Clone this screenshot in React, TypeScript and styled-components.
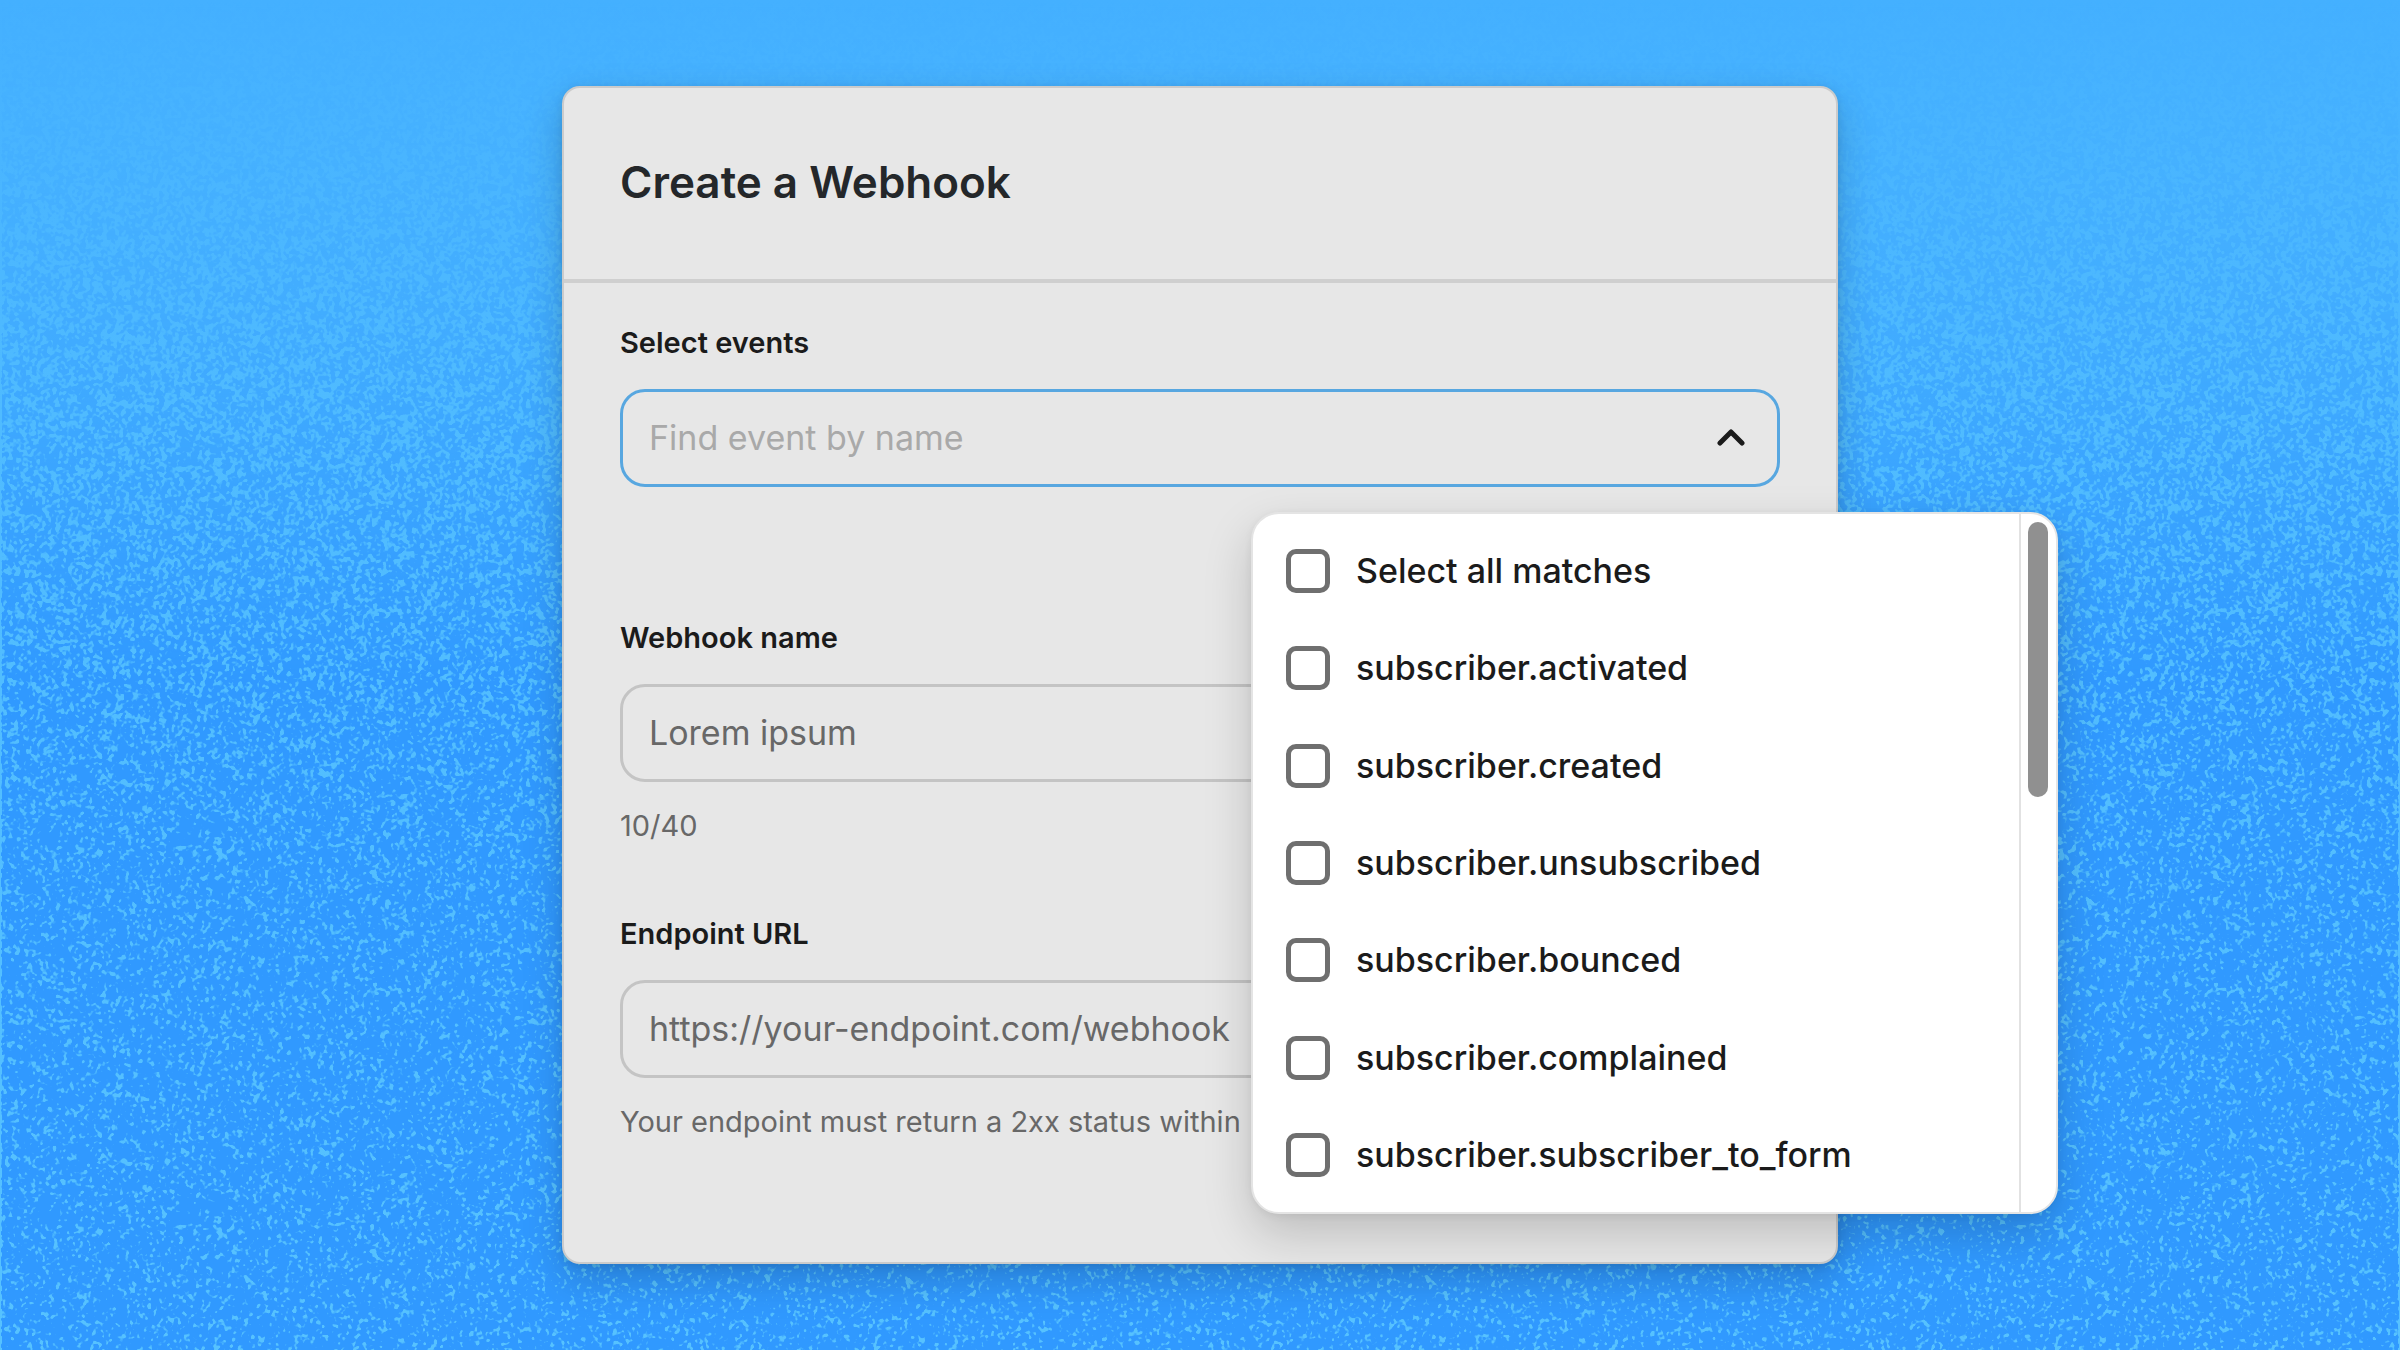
import React, { useState } from "react";
import styled, { createGlobalStyle, css } from "styled-components";

const ink = "#1b1b1b";
const muted = "#686868";

const GlobalStyle = createGlobalStyle`
  *, *::before, *::after { box-sizing: border-box; }
  body {
    margin: 0;
    font-family: Inter, "Liberation Sans", sans-serif;
    background: #45b0ff;
    color: ${ink};
  }
`;

const Page = styled.main`
  position: relative;
  display: flex;
  align-items: center;
  justify-content: center;
  min-height: 100vh;
  overflow: hidden;
  background: linear-gradient(#44b0ff 0%, #4ab6ff 14%, #4fbbff 30%, #56c2ff 100%);
`;

const Grain = styled.svg`
  position: absolute;
  top: 0;
  left: 0;
  width: 100%;
  height: calc(100% + 4px);
`;

const Card = styled.section`
  position: relative;
  width: 100%;
  max-width: 1276px;
  border: 2px solid #cbcbcb;
  border-radius: 18px;
  background: #e7e7e7;
  box-shadow: 0 16px 40px rgba(0, 0, 0, 0.18), 0 2px 8px rgba(0, 0, 0, 0.1);
`;

const CardHeader = styled.header`
  padding: 66px 56px 69px;
  border-bottom: 4px solid #cfcfcf;
`;

const Title = styled.h1`
  margin: 0;
  font-size: 44px;
  line-height: 56px;
  font-weight: 600;
  color: #24272a;
`;

const Form = styled.form`
  display: flex;
  flex-direction: column;
  gap: 72px;
  padding: 42px 56px 122px;
`;

const Field = styled.div`
  display: flex;
  flex-direction: column;
`;

const FieldLabel = styled.label`
  margin-bottom: 28px;
  font-size: 29px;
  line-height: 36px;
  font-weight: 600;
`;

const Hint = styled.p`
  min-height: 35px;
  margin: 26px 0 0;
  font-size: 29px;
  line-height: 36px;
  color: ${muted};
`;

const box = css`
  height: 98px;
  border: 3px solid #c4c4c4;
  border-radius: 25px;
`;

const inputText = css`
  min-width: 0;
  padding: 0 26px 1px;
  background: transparent;
  font-family: inherit;
  font-size: 34px;
  line-height: 42px;
  color: ${muted};
  outline: none;
  &::placeholder { color: #a9a9a9; opacity: 1; }
`;

const TextInput = styled.input`
  ${box}
  ${inputText}
  width: 100%;
`;

const Combobox = styled.div`
  ${box}
  position: relative;
  display: flex;
  align-items: center;
  border-color: #58a7e0;
`;

const SearchInput = styled.input`
  ${inputText}
  flex: 1;
  height: 100%;
  border: 0;
`;

const Toggle = styled.button`
  display: flex;
  padding: 16px 32px 18px;
  border: 0;
  background: none;
  color: ${ink};
  cursor: pointer;
`;

const Menu = styled.div`
  position: absolute;
  z-index: 1;
  top: calc(100% + 28px);
  right: -281px;
  display: flex;
  width: 807px;
  height: 702px;
  border: 2px solid #e4e4e4;
  border-radius: 28px;
  background: #fff;
  box-shadow: 0 20px 48px rgba(0, 0, 0, 0.18), 0 2px 8px rgba(0, 0, 0, 0.06);
`;

const Options = styled.ul`
  flex: 1;
  display: grid;
  grid-auto-rows: 1fr;
  margin: 0;
  padding: 8px 0;
  list-style: none;
`;

const Option = styled.li`
  display: flex;
  align-items: center;
  gap: 26px;
  padding: 0 33px;
  font-size: 34px;
  line-height: 42px;
  font-weight: 500;
`;

const Checkbox = styled.input`
  appearance: none;
  width: 44px;
  height: 44px;
  margin: 0;
  border: 5px solid #6f6f6f;
  border-radius: 10px;
  background: #fff;
  &:checked { background: #4a9fdc; }
`;

const Track = styled.div`
  width: 37px;
  padding: 8px 7px;
  border-left: 2px solid #e2e2e2;
`;

const Thumb = styled.div`
  width: 20px;
  height: 275px;
  border-radius: 10px;
  background: #909090;
`;

const events = [
  "Select all matches",
  "subscriber.activated",
  "subscriber.created",
  "subscriber.unsubscribed",
  "subscriber.bounced",
  "subscriber.complained",
  "subscriber.subscriber_to_form",
];

function GrainBackdrop() {
  return (
    <Grain aria-hidden="true">
      <defs>
        <linearGradient id="density" x1="0" y1="0" x2="0" y2="1">
          <stop offset="0" stopColor="#fff" stopOpacity="0" />
          <stop offset="0.25" stopColor="#fff" stopOpacity="0.2" />
          <stop offset="0.65" stopColor="#fff" stopOpacity="0.85" />
          <stop offset="1" stopColor="#fff" stopOpacity="1" />
        </linearGradient>
        <linearGradient id="strength" x1="0" y1="0" x2="0" y2="1">
          <stop offset="0" stopColor="#fff" stopOpacity="0" />
          <stop offset="0.1" stopColor="#fff" stopOpacity="0.12" />
          <stop offset="0.28" stopColor="#fff" stopOpacity="0.5" />
          <stop offset="0.5" stopColor="#fff" stopOpacity="1" />
        </linearGradient>
        <mask id="fade" maskContentUnits="objectBoundingBox">
          <rect width="1" height="1" fill="url(#strength)" />
        </mask>
        <filter id="grain" x="0" y="0" width="1" height="1" colorInterpolationFilters="sRGB">
          <feTurbulence type="fractalNoise" baseFrequency="7.37 7.43" numOctaves="1" seed="4" />
          <feGaussianBlur stdDeviation="0.8" result="noise" />
          <feComposite in="noise" in2="SourceGraphic" operator="arithmetic" k1="0" k2="42" k3="1.4" k4="-20.6" result="specks" />
          <feFlood floodColor="#3099ff" />
          <feComposite operator="in" in2="specks" />
        </filter>
      </defs>
      <g mask="url(#fade)">
        <rect width="100%" height="100%" fill="url(#density)" filter="url(#grain)" />
      </g>
    </Grain>
  );
}

export default function App() {
  const [open, setOpen] = useState(true);

  return (
    <>
      <GlobalStyle />
      <Page>
        <GrainBackdrop />
        <Card>
          <CardHeader>
            <Title>Create a Webhook</Title>
          </CardHeader>
          <Form>
            <Field>
              <FieldLabel htmlFor="events">Select events</FieldLabel>
              <Combobox>
                <SearchInput id="events" type="text" placeholder="Find event by name" />
                <Toggle type="button" aria-label="Toggle events" aria-expanded={open} onClick={() => setOpen(!open)}>
                  <svg width="28" height="17" viewBox="0 0 28 17" fill="none" aria-hidden="true">
                    <path d="M3 14L14 3L25 14" stroke="currentColor" strokeWidth="5" strokeLinecap="round" strokeLinejoin="round" />
                  </svg>
                </Toggle>
                {open && (
                  <Menu>
                    <Options>
                      {events.map((name, i) => (
                        <Option key={name}>
                          <Checkbox type="checkbox" id={`event-${i}`} />
                          <label htmlFor={`event-${i}`}>{name}</label>
                        </Option>
                      ))}
                    </Options>
                    <Track>
                      <Thumb />
                    </Track>
                  </Menu>
                )}
              </Combobox>
              <Hint />
            </Field>
            <Field>
              <FieldLabel htmlFor="name">Webhook name</FieldLabel>
              <TextInput id="name" type="text" defaultValue="Lorem ipsum" />
              <Hint>10/40</Hint>
            </Field>
            <Field>
              <FieldLabel htmlFor="url">Endpoint URL</FieldLabel>
              <TextInput id="url" type="url" defaultValue="https://your-endpoint.com/webhook" />
              <Hint>Your endpoint must return a 2xx status within</Hint>
            </Field>
          </Form>
        </Card>
      </Page>
    </>
  );
}
